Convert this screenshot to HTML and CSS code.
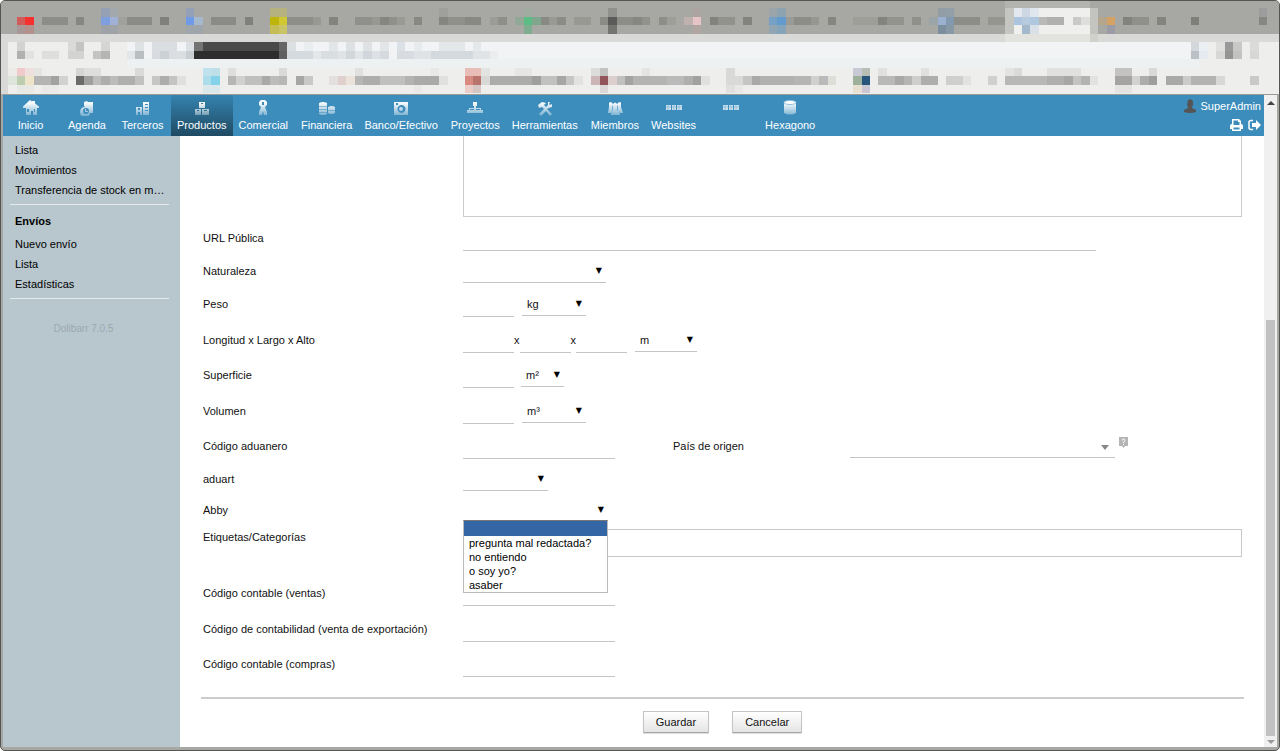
FILE: index.html
```html
<!DOCTYPE html>
<html lang="es">
<head>
<meta charset="utf-8">
<title>Productos - Dolibarr</title>
<link rel="stylesheet" href="styles.css">
</head>
<body>
<div class="window">
  <svg class="chrome" id="chrome" viewBox="0.12 0.12 151.3 11" preserveAspectRatio="none" shape-rendering="crispEdges" aria-hidden="true"></svg>
  <div class="viewport">
    <div class="page">
      <header class="topbar">
        <svg width="0" height="0" class="defs" aria-hidden="true"><defs><linearGradient id="g" gradientUnits="userSpaceOnUse" x1="0" y1="0" x2="0" y2="16"><stop offset="0.2" stop-color="#fff" stop-opacity="0.95"/><stop offset="1" stop-color="#fff" stop-opacity="0.3"/></linearGradient></defs></svg>
        <nav class="menu">
          <a href="#" class="item"><svg class="ico" viewBox="0 0 16 16"><path fill="url(#g)" d="M7 0l2 1.500V1h3v2.500l4 3V8h-2v7h-4v-4H8v4H3V8H0V6.500zM4 9v3h2V9zM11 9v3h1V9z"/></svg><span>Inicio</span></a>
          <a href="#" class="item"><svg class="ico" viewBox="0 0 16 16"><path fill="url(#g)" fill-rule="evenodd" d="M5 2l3-1 1 1h5v11h-3a5 5 0 1 1-5-6l-1-1zM7 8a3 3 0 1 0 0 6 3 3 0 0 0 0-6zM6 9h1v2h2v1H6z"/></svg><span>Agenda</span></a>
          <a href="#" class="item"><svg class="ico" viewBox="0 0 16 16"><path fill="url(#g)" fill-rule="evenodd" d="M1 7h6v8H5v-3H3v3H1zM3 8v2h2V8zM8 2h6v13H8zM10 4v1h3V4zM10 7v1h3V7zM10 10v1h3v-1z"/></svg><span>Terceros</span></a>
          <a href="#" class="item active"><svg class="ico" viewBox="0 0 16 16"><path fill="url(#g)" fill-rule="evenodd" d="M5 2h6v6H5zM7 3v1h2V3zM1 9h6v6H1zM3 10v1h2v-1zM8 9h7v6H8zM10 10v1h3v-1z"/></svg><span>Productos</span></a>
          <a href="#" class="item"><svg class="ico" viewBox="0 0 16 16"><path fill="url(#g)" fill-rule="evenodd" d="M6 0h4l2 2v3l-2 2 2 5v3H9l-1-4-1 4H4v-3l2-5-2-2V2zM7 2v3h2V2z"/></svg><span>Comercial</span></a>
          <a href="#" class="item"><svg class="ico" viewBox="0 0 16 16"><path fill="url(#g)" d="M0 3q4-2 8 0v3H0zM0 6.500h8V9H0zM0 9.500h8V12H0zM0 12.500h8V14q-4 2-8 0zM9 7q4-2 7 0v3H9zM9 10.500h7V13q-4 2-7 0z"/></svg><span>Financiera</span></a>
          <a href="#" class="item"><svg class="ico" viewBox="0 0 16 16"><path fill="url(#g)" fill-rule="evenodd" d="M1 2h14v13H1zM3 3v2h2V3zM8 5a4 4 0 1 0 1 0zM8 7a2 2 0 1 1 0 4 2 2 0 0 1 0-4z"/></svg><span>Banco/Efectivo</span></a>
          <a href="#" class="item"><svg class="ico" viewBox="0 0 16 16"><path fill="url(#g)" d="M6 2h4v4H9v2h5v2h2v3h-5v-3h2V9H9v1h2v3H5v-3h2V9H3v1h2v3H0v-3h2V8h5V6H6z"/></svg><span>Proyectos</span></a>
          <a href="#" class="item"><svg class="ico" viewBox="0 0 16 16"><path fill="url(#g)" d="M1 5l4-3 4 1-2 2 2 2 2-2V2h2l-1 2 1 1 2-1v3l-3 1-2 1 5 5-2 2-4-5-5 5-2-2 5-5-2-2-3 1z"/></svg><span>Herramientas</span></a>
          <a href="#" class="item"><svg class="ico" viewBox="0 0 16 16"><path fill="url(#g)" d="M2 3q2-2 3 0l1 1q2-3 4 0l1-1q2-2 3 0v4l2 6h-3l-1-3 1 5H4l1-5-1 3H1l1-6z"/><path d="M5.500 5.500v5M10.500 5.500v5" stroke="#3c8dbc" stroke-opacity=".6"/></svg><span>Miembros</span></a>
          <a href="#" class="item"><svg class="ico" viewBox="0 0 16 16"><path fill="#fff" fill-opacity=".72" d="M0 5h5v5H0zM6 5h4v5H6zM11 5h5v5h-5z"/><path d="M0 7h16M2 5v5M8 5v5M13 5v5" stroke="#3c8dbc" stroke-opacity=".3"/></svg><span>Websites</span></a>
          <a href="#" class="item" aria-label="Módulo"><svg class="ico" viewBox="0 0 16 16"><path fill="#fff" fill-opacity=".72" d="M0 5h5v5H0zM6 5h4v5H6zM11 5h5v5h-5z"/><path d="M0 7h16M2 5v5M8 5v5M13 5v5" stroke="#3c8dbc" stroke-opacity=".3"/></svg></a>
          <a href="#" class="item"><svg class="ico" viewBox="0 0 16 16"><path fill="url(#g)" d="M2 3v10q6 3 12 0V3z"/><ellipse cx="8" cy="2.500" rx="6" ry="2" fill="#fff" stroke="#8fbdd8"/></svg><span>Hexagono</span></a>
        </nav>
        <div class="user">
          <a href="#" class="login"><svg width="12" height="14" viewBox="0 0 12 14"><path fill="#555" d="M4 1q3-2 5 1v4L8 8v1l4 2v2q-6 2-12 0v-2l4-2V8L3 6z"/></svg>SuperAdmin</a>
          <div class="tools">
            <a href="#" aria-label="Imprimir"><svg width="13" height="12" viewBox="0 0 13 12"><path fill="#fff" fill-rule="evenodd" d="M2 0h7l2 2v3q2 0 2 2v3h-2v2H2v-2H0V7q0-2 2-2zM3.500 1.500V6h6V3H8V1.500zM3.500 8.500v2h6v-2z"/></svg></a>
            <a href="#" aria-label="Salir"><svg width="13" height="12" viewBox="0 0 13 12"><path fill="none" stroke="#fff" stroke-width="1.500" d="M5 1.500H3Q1 1.500 1 3.500v5q0 2 2 2h2"/><path fill="#fff" d="M4 4h4V1l5 5-5 5V8H4z"/></svg></a>
          </div>
        </div>
      </header>
      <div class="columns">
        <aside class="side">
          <div class="group">
            <a href="#">Lista</a>
            <a href="#">Movimientos</a>
            <a href="#">Transferencia de stock en m…</a>
          </div>
          <div class="group">
            <a href="#" class="title">Envíos</a>
            <a href="#">Nuevo envío</a>
            <a href="#">Lista</a>
            <a href="#">Estadísticas</a>
          </div>
          <p class="version">Dolibarr 7.0.5</p>
        </aside>
        <main class="main">
          <form>
            <div class="row first"><span></span><textarea class="area" aria-label="Descripción"></textarea></div>
            <div class="row"><label for="url">URL Pública</label><input id="url" class="line url"></div>
            <div class="row short"><label for="nat">Naturaleza</label><span class="pick nat"><select id="nat"><option></option></select></span></div>
            <div class="row"><label for="peso">Peso</label><div class="fields"><input id="peso" class="line num"><span class="pick unit gap"><select aria-label="Unidad de peso"><option>kg</option></select></span></div></div>
            <div class="row tall"><label for="lon">Longitud x Largo x Alto</label><div class="fields"><input id="lon" class="line num"><span>x</span><input class="line num" aria-label="Largo"><span>x</span><input class="line num" aria-label="Alto"><span class="pick length gap"><select aria-label="Unidad de longitud"><option>m</option></select></span></div></div>
            <div class="row"><label for="sup">Superficie</label><div class="fields"><input id="sup" class="line num"><span class="pick small gap"><select aria-label="Unidad de superficie"><option>m²</option></select></span></div></div>
            <div class="row tall"><label for="vol">Volumen</label><div class="fields"><input id="vol" class="line num"><span class="pick unit gap"><select aria-label="Unidad de volumen"><option>m³</option></select></span></div></div>
            <div class="row split"><label for="adu">Código aduanero</label><input id="adu" class="line code"><label for="pais">País de origen</label><div class="fields"><span class="pick country"><select id="pais"><option></option></select></span><svg class="help" width="9" height="11" viewBox="0 0 9 11"><path fill="#b5b5b5" d="M0 0h9v9H6l-1.500 2L3 9H0z"/><path d="M3 3.500Q3 2 4.500 2T6 3.500Q6 4.500 4.500 5v1M4.500 7v1" fill="none" stroke="#fff"/></svg></div></div>
            <div class="row short"><label for="art">aduart</label><span class="pick art"><select id="art"><option></option></select></span></div>
            <div class="row abby"><label for="abby">Abby</label><span class="pick open"><select id="abby"><option></option></select>
              <ul class="list" role="listbox" aria-label="Abby"><li role="option" aria-selected="true" class="on"></li><li role="option">pregunta mal redactada?</li><li role="option">no entiendo</li><li role="option">o soy yo?</li><li role="option">asaber</li></ul></span></div>
            <div class="row tags"><label for="tags">Etiquetas/Categorías</label><input id="tags" class="box"></div>
            <div class="row"><label for="cv">Código contable (ventas)</label><input id="cv" class="line code"></div>
            <div class="row tall"><label for="ce">Código de contabilidad (venta de exportación)</label><input id="ce" class="line code"></div>
            <div class="row"><label for="cc">Código contable (compras)</label><input id="cc" class="line code"></div>
            <div class="actions"><button type="submit">Guardar</button><button type="button">Cancelar</button></div>
          </form>
        </main>
      </div>
    </div>
    <div class="scroll" aria-hidden="true"><span class="up"></span><span class="rail"><span class="thumb"></span></span><span class="down"></span></div>
  </div>
</div>
<script src="chrome.js"></script>
</body>
</html>
```
FILE: styles.css
```css
* { box-sizing: border-box; }
body { margin: 0; background: #fff; color: #111; font: 11px/16px "Liberation Sans", Arial, sans-serif; }
a { color: inherit; text-decoration: none; }
input, select, textarea, button { font: inherit; color: inherit; margin: 0; }
.window { min-height: 100vh; display: flex; flex-direction: column; border: 1px solid #555653; border-radius: 5px; background: #a7a8a3; overflow: hidden; }
.chrome { display: block; width: 100%; height: 93px; }
.viewport { flex: 1; display: flex; margin: 0 2px 3px; border-top: 1px solid #9a9a96; background: #fff; }
.page { flex: 1; min-width: 0; display: flex; flex-direction: column; }

.topbar { display: flex; justify-content: space-between; height: 41px; background: #3c8dbc; color: #fff; }
.defs { position: absolute; }
.menu { display: flex; }
.item { min-width: 56px; padding: 5px 7px 0 6px; display: flex; flex-direction: column; align-items: center; gap: 1px; }
.item:nth-child(even) { padding-right: 6px; }
.item.active { background: linear-gradient(#3583af, #1f4a63); }
.ico { width: 16px; height: 16px; flex: none; }
.user { display: flex; flex-direction: column; align-items: flex-end; gap: 5px; padding: 3px 3px 0 0; }
.login { display: flex; align-items: center; gap: 4px; }
.tools { display: flex; gap: 5px; }
.tools svg { display: block; }

.columns { flex: 1; display: flex; }
.side { width: 177px; flex: none; background: #b8c6cd; padding: 0 11px 0 7px; color: #000; }
.group { border-bottom: 1px solid #e4eaec; padding: 4px 0 4px 5px; }
.group a { display: block; height: 20px; line-height: 20px; white-space: nowrap; }
.group + .group { padding-top: 5px; padding-bottom: 4px; }
.group .title { height: 24px; line-height: 22px; font-weight: bold; }
.version { margin: 23px 0 0; padding-right: 12px; text-align: center; font-size: 10px; line-height: 14px; color: #9aa9b1; }

.main { flex: 1; min-width: 0; padding: 0 20px 0 21px; }
.row { display: grid; grid-template-columns: 260px 1fr; align-items: center; height: 35px; padding: 0 2px; }
.row label { padding-bottom: 1px; }
.row.short { height: 31px; }
.row.tall { height: 36px; }
.row.split { grid-template-columns: 260px 210px 177px 1fr; }
.row.first { height: 85px; align-items: start; }
.row.abby { height: 30px; }
.row.tags { height: 51px; align-items: start; padding-top: 4px; }
.area { width: 100%; height: 81px; border: 1px solid #ccc; border-top: 0; resize: none; display: block; }
.line { height: 25px; border: 0; border-bottom: 1px solid #c4c4c4; background: none; padding: 0 4px; }
.url { width: 633px; max-width: 100%; }
.code { width: 152px; }
.num { width: 51px; }
.fields { display: flex; align-items: center; }
.gap { margin-left: 8px; }
.pick { position: relative; display: block; height: 23px; border-bottom: 1px solid #c4c4c4; }
.pick select { appearance: none; display: block; width: 100%; height: 22px; border: 0; background: none; padding: 0 5px; }
.pick::after { content: "▼"; position: absolute; right: 4px; top: 3px; font: 8px/16px "DejaVu Sans", sans-serif; color: #000; pointer-events: none; }
.nat { width: 143px; }
.unit { width: 64px; }
.length { width: 62px; }
.small { width: 43px; margin-left: 7px; }
.art { width: 85px; }
.country { width: 265px; }
.country::after { content: ""; right: 6px; top: 10px; border: 4px solid transparent; border-top: 5px solid #888; border-bottom: 0; }
.help { margin: -8px 0 0 4px; }
.open { width: 145px; border: 0; }
.list { position: absolute; z-index: 2; left: 0; top: 21px; width: 100%; margin: 0; padding: 0; list-style: none; background: #fff; border: 1px solid #bbb; border-top-color: #777; color: #000; }
.list li { height: 14px; line-height: 14px; padding: 0 5px; white-space: nowrap; }
.list .on { height: 15px; background: #3465a4; }
.box { width: 100%; height: 28px; border: 1px solid #c9c9c9; background: #fff; }
.actions { display: flex; justify-content: center; gap: 23px; margin-top: 15px; padding: 12px 0; border-top: 2px solid #ccc; }
button { height: 22px; padding: 0 12px; border: 1px solid #c4c4c4; border-bottom-color: #a5a5a5; border-radius: 1px; background: linear-gradient(#fff, #e4e4e4); box-shadow: 0 1px 1px #ddd; }

.scroll { width: 13px; display: flex; flex-direction: column; align-items: center; background: #f0f0f0; padding: 6px 0 3px; }
.up, .down { border: 4px solid transparent; }
.up { border-top: 0; border-bottom-color: #444; }
.down { border-bottom: 0; border-top-color: #999; }
.rail { flex: 1; display: flex; flex-direction: column; justify-content: flex-end; width: 9px; padding-bottom: 4px; }
.thumb { height: 66%; background: #c1c1c1; }
```
FILE: chrome.js
```js
// Browser frame mosaic: "row|col,length,colour ..." on a grid of square cells.
const bands = [
  [0, 4, 0, 152, "a7a8a3"], [4, 1, 0, 152, "d9d9d7"], [5, 7, 0, 152, "eeeeec"],
  [5, 2, 15, 126, "f1f3f5"], [7, 1, 15, 127, "eef1f1"], [5, 7, 0, 1, "d9d9d7"],
  [0, 1, 119, 10, "b3b4b0"], [1, 3, 119, 1, "c5c6c1"], [1, 3, 120, 9, "efefed"],
  [1, 3, 129, 1, "c3c4bf"], [4, 1, 119, 10, "e2e2df"], [4, 1, 129, 1, "d0d1cb"]
];
const cells = [
  "1|12,1,95a0b5 13,1,a3a8ad 22,1,93a0b5 32,2,b5b280 52,1,9fa09b 62,1,a0aca0 72,1,90918c 82,1,aba4a0 91,1,9ba5a9 92,1,8ea3b0 111,1,929da5 112,1,929ea8 120,1,e3e8ee 121,1,ccd7e3 122,1,e0e6ed 149,1,9b9c9b",
  "2|2,1,d15b59 3,1,f62f2f 5,3,8c8d88 9,1,868782 12,1,7d9fe0 13,1,9fb2d6 14,1,a0a19c 15,3,8a8b86 19,1,7f807b 22,1,6f9ae8 23,1,a6b8cc 25,3,8a8b86 29,1,7f807b 32,1,bdb40c 33,1,d0c832 34,3,8d8e88 37,1,989993 39,1,83847e 42,2,8f908b 44,1,979892 45,1,85867f 46,1,8f908b 47,1,9a9b95 49,1,888983 52,1,85867f 53,2,8f908a 55,2,888983 58,1,9b9c97 59,1,8e8f89 61,1,92a897 62,1,5bbc84 63,1,80a78e 64,1,888983 65,1,989993 66,1,8b8c86 68,2,979892 71,1,8a8b85 72,1,5b5c59 73,2,8c8d87 75,1,868781 76,1,91928c 78,1,8d8e88 79,1,9d9e98 81,1,bfb2ae 82,1,e6c4c6 84,1,82837d 85,2,91928c 88,1,82837d 91,1,76a0c6 92,1,649bcf 93,1,9a9b95 94,2,8c8d87 96,1,969791 98,1,85867f 101,3,9d9e98 104,1,83847e 105,2,92938d 108,1,8f908a 110,1,9ba5a8 111,1,9ab2cf 112,1,8299b0 113,3,8c8d87 117,2,94958f 120,1,acc4dd 121,1,b7cade 122,1,b0c8df 123,1,b9b9b7 124,2,b0b0ae 127,1,c9c9c7 128,1,dededc 130,1,b4a58d 131,1,d4a265 133,1,82837d 134,2,8f908a 137,1,83847e 141,1,7e7f79 149,1,868782",
  "3|2,1,a89794 3,1,b4908d 12,1,9ea2a6 13,1,9fa3a8 22,2,9ea5ab 32,1,c5bd55 33,1,c9c465 62,1,7fad90 72,1,73746f 82,1,b0a5a1 91,1,91a5b2 92,1,85a3b9 111,1,7b8f9f 112,1,8799a5 121,1,a5b9cc 122,1,d9e0e7 131,1,9b9ba5",
  "5|2,1,d3d3d1 8,1,dadad8 9,1,c4c4c2 12,1,d5d5d3 16,1,dfe2e5 18,3,dadde1 22,1,dcdfe3 23,1,747474 24,9,4a4a4a 33,1,666666 34,1,dde0e3 36,1,eaedf0 39,1,e3e6e9 41,1,dee1e4 43,1,dfe2e5 45,1,e3e6e9 47,1,dbe1e6 49,1,e8ebee 52,3,e4e7ea 56,1,e5e8eb 141,1,d4d8dd 142,1,ebeff3 144,1,e0e0de 145,1,999999 146,1,c8c8c6 148,1,dbdbd9",
  "6|2,1,b1b1af 3,1,e2e2e0 5,2,dededc 8,2,d3d3d1 11,1,c4c4c2 12,1,b5b5b3 15,1,e3e6e9 16,1,b9bec1 18,1,d8dce1 19,1,ccd1d5 20,2,dadee1 22,1,c8ced2 23,10,2e2e2e 33,1,606060 34,3,d5dade 37,1,e3e7ea 38,2,d9dee1 40,1,dfe3e6 41,1,d2d7da 42,1,e2e5e8 43,1,d0d6db 44,1,dde1e5 45,1,d5dade 47,2,d8dce0 49,2,e0e3e6 51,5,d4d9dd 56,2,e1e4e7 58,1,ebedef 141,1,bbc0c5 142,1,e4eaf0 144,1,d7d7d5 145,1,949492 146,1,c2c2c0 148,1,d7d7d5",
  "8|1,1,edebe8 2,1,f0caca 3,1,efdfdd 4,1,e4e4e2 9,1,d5d5d3 10,2,dededc 16,1,dadad8 24,1,bfe2ee 25,1,bde0e9 27,1,dededc 33,1,dadad8 42,1,e0e0de 51,1,e8e8e6 55,2,e8bdb8 57,1,e3e3e1 61,2,e6e6e4 70,1,dcdcda 71,1,c3c3c1 76,1,e4e4e2 86,1,d9d9d7 101,1,c8c9d7 102,1,b9beb4 104,1,e0e0de 109,1,e0e0de 119,1,e3e3e1 120,1,dadad8 124,4,e0e0de 132,2,c4c3c1 136,1,d9d9d7",
  "9|1,1,dee5db 2,1,bdceb0 3,1,eee4c8 4,2,b4b4b2 6,1,a2a2a0 7,1,d2d2d0 9,1,6b6b6a 10,1,a0a09e 11,1,bebebc 12,1,aeaeac 13,1,bcbcba 14,2,afafad 16,1,c1c1bf 18,1,c6c6c4 19,1,adadab 20,1,c4c4c2 21,1,e0e0de 24,1,addcea 25,1,85d3eb 27,1,b6b6b4 28,1,d0d0ce 29,2,bfbfbd 31,1,a9a9a7 32,1,bcbcba 33,1,b7b7b5 35,1,a6a6a4 36,1,c8c8c6 39,1,e3dfde 40,1,e0d0cd 41,1,ebe3da 42,1,b6b6b4 43,2,adadab 45,3,c0c0be 48,1,b3b3b1 49,3,aaaaa8 52,1,e0e0de 55,1,d88980 56,1,b7736c 57,1,d8d8d6 58,5,acacaa 63,1,9f9f9d 64,2,c1c1bf 66,1,a6a6a4 67,1,c6c6c4 68,1,e2e2e0 70,1,ccb5b6 71,1,92555b 72,1,dccfce 73,1,c0c0be 74,1,a3a3a1 75,4,b4b4b2 79,2,bababa 81,1,afafad 82,1,a1a19f 83,1,e0e0de 86,2,d9d9d7 88,1,c5c5c3 89,1,a9a9a7 90,4,b1b1af 94,2,b5b5b3 96,1,d0d0ce 97,1,bababa 98,1,deded9 101,1,9db09b 102,1,27557c 104,2,b9b9b7 106,1,a8a8a6 107,1,b5b5b3 108,1,cececc 109,2,aeaeac 112,2,cfcfcd 114,1,e2e2e0 117,1,d0d0ce 119,5,b8b8b6 124,2,afafad 126,1,a7a7a5 127,1,c4c4c2 128,1,b3b3b1 129,1,e2e2e0 132,2,a5a4a2 134,1,d2d2d0 135,1,adadab 136,1,9e9e9c 138,2,a9a9a7 140,1,cbcbc9 141,3,b3b3b1 144,1,d8d8d6 148,1,c9c9c7",
  "10|2,1,e6e8e3 3,1,e9e8e3 5,2,e9e9e7 24,2,dbe8eb 49,1,e9e9e7 55,1,eacdc9 56,1,d5c6c4 71,1,dcd8d7 86,1,e0e0de 87,1,e8e8e6 101,1,e6dfd2 102,1,cbc6d3 132,2,e3e3e1"
];
const svg = document.getElementById("chrome");
function paint(row, rows, col, cols, colour) {
  const r = document.createElementNS("http://www.w3.org/2000/svg", "rect");
  r.setAttribute("x", col);
  r.setAttribute("y", row);
  r.setAttribute("width", cols);
  r.setAttribute("height", rows);
  r.setAttribute("fill", "#" + colour);
  svg.appendChild(r);
}
bands.forEach(([row, rows, col, cols, colour]) => paint(row, rows, col, cols, colour));
cells.forEach(line => {
  const [row, list] = line.split("|");
  list.split(" ").forEach(item => {
    const [col, len, colour] = item.split(",");
    paint(+row, 1, +col, +len, colour);
  });
});
```
